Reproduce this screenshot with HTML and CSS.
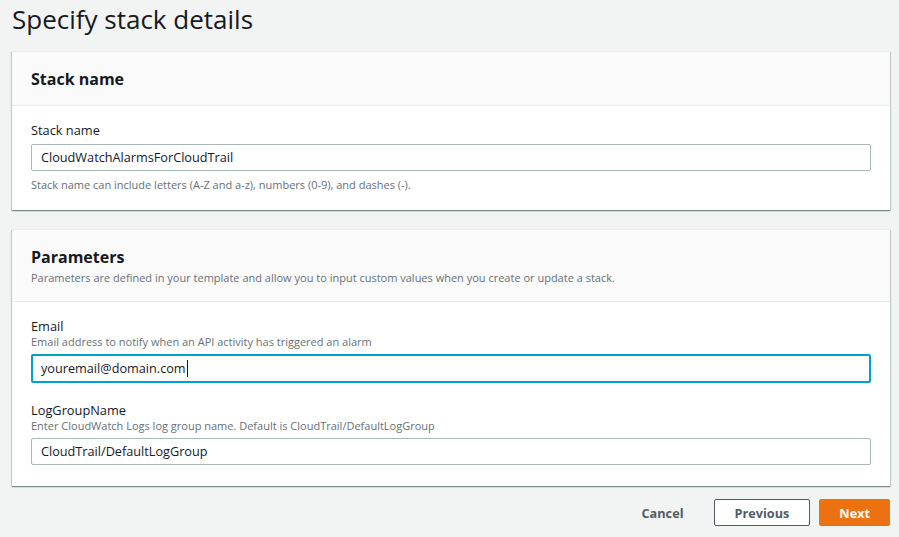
FILE: index.html
```html
<!DOCTYPE html>
<html lang="en">
<head>
<meta charset="utf-8">
<title>Specify stack details</title>
<link rel="stylesheet" href="styles.css">
</head>
<body>
<main class="page">
  <h1 class="page-title">Specify stack details</h1>

  <section class="card">
    <header class="card-header">
      <h2 class="card-title">Stack name</h2>
    </header>
    <div class="card-body">
      <div class="field">
        <label class="field-label">Stack name</label>
        <div class="input">CloudWatchAlarmsForCloudTrail</div>
        <p class="field-hint-below">Stack name can include letters (A-Z and a-z), numbers (0-9), and dashes (-).</p>
      </div>
    </div>
  </section>

  <section class="card card-params">
    <header class="card-header card-header-params">
      <h2 class="card-title">Parameters</h2>
      <p class="card-desc">Parameters are defined in your template and allow you to input custom values when you create or update a stack.</p>
    </header>
    <div class="card-body card-body-params">
      <div class="field">
        <label class="field-label">Email</label>
        <p class="field-hint">Email address to notify when an API activity has triggered an alarm</p>
        <div class="input input-focus">youremail@domain.com<span class="caret"></span></div>
      </div>
      <div class="field field-second">
        <label class="field-label">LogGroupName</label>
        <p class="field-hint">Enter CloudWatch Logs log group name. Default is CloudTrail/DefaultLogGroup</p>
        <div class="input">CloudTrail/DefaultLogGroup</div>
      </div>
    </div>
  </section>

  <div class="actions">
    <button class="btn btn-link">Cancel</button>
    <button class="btn btn-normal">Previous</button>
    <button class="btn btn-primary">Next</button>
  </div>
</main>
</body>
</html>
```

FILE: styles.css
```css
* { box-sizing: border-box; }

html, body {
  margin: 0;
  padding: 0;
  background: #f2f3f3;
  color: #16191f;
  font-family: "Open Sans", "Noto Sans", Arial, sans-serif;
}

.page {
  padding: 0 9px 10px 12px;
}

.page-title {
  margin: 0;
  padding-top: 2px;
  height: 51px;
  font-size: 26px;
  line-height: 34px;
  font-weight: 400;
}

.card {
  background: #fff;
  border-top: 1px solid #eaeded;
  box-shadow: 0 1px 1px 0 rgba(0, 28, 36, 0.3), 1px 1px 1px 0 rgba(0, 28, 36, 0.15), -1px 1px 1px 0 rgba(0, 28, 36, 0.15);
}

.card-params {
  margin-top: 19px;
}

.card-header {
  background: #fafafa;
  border-bottom: 1px solid #eaeded;
  padding: 17px 19px 16px 19px;
}

.card-header-params {
  padding-bottom: 15px;
}

.card-title {
  margin: 0;
  font-size: 16px;
  line-height: 20px;
  font-weight: 700;
}

.card-desc {
  margin: 3px 0 0 0;
  font-size: 11px;
  line-height: 16px;
  color: #687078;
}

.card-body {
  padding: 16px 19px 17px 19px;
}

.card-body-params {
  padding-bottom: 21px;
}

.field-label {
  display: block;
  font-size: 12.8px;
  line-height: 16px;
}

.field-hint {
  margin: 0;
  font-size: 11px;
  line-height: 16px;
  color: #687078;
}

.field-hint-below {
  margin: 6px 0 0 0;
  font-size: 11px;
  line-height: 16px;
  color: #687078;
}

.input {
  margin-top: 6px;
  height: 27px;
  border: 1px solid #aab7b8;
  border-radius: 2px;
  padding: 0 9px;
  font-size: 12.7px;
  line-height: 25px;
  background: #fff;
}

.field .field-hint + .input {
  margin-top: 4px;
}

.field .field-hint + .input-focus {
  margin-top: 4px;
  height: 29px;
  border: 2px solid #00a1c9;
  padding: 0 8px;
  line-height: 25px;
}

.caret {
  display: inline-block;
  width: 1px;
  height: 17px;
  background: #16191f;
  vertical-align: -4px;
  margin-left: 1px;
}

.field-second {
  margin-top: 19px;
}

.actions {
  display: flex;
  justify-content: flex-end;
  gap: 9px;
  margin-top: 13px;
}

.btn {
  height: 27px;
  font-family: inherit;
  font-size: 12.7px;
  font-weight: 700;
  border-radius: 2px;
  padding: 0 20px;
  cursor: pointer;
}

.btn-link {
  background: transparent;
  border: 1px solid transparent;
  color: #545b64;
  padding: 0 20px 0 22px;
}

.btn-normal {
  background: #fff;
  border: 1px solid #545b64;
  color: #545b64;
}

.btn-primary {
  background: #ec7211;
  border: 1px solid #ec7211;
  color: #fff;
  padding: 0 19px;
}
```
